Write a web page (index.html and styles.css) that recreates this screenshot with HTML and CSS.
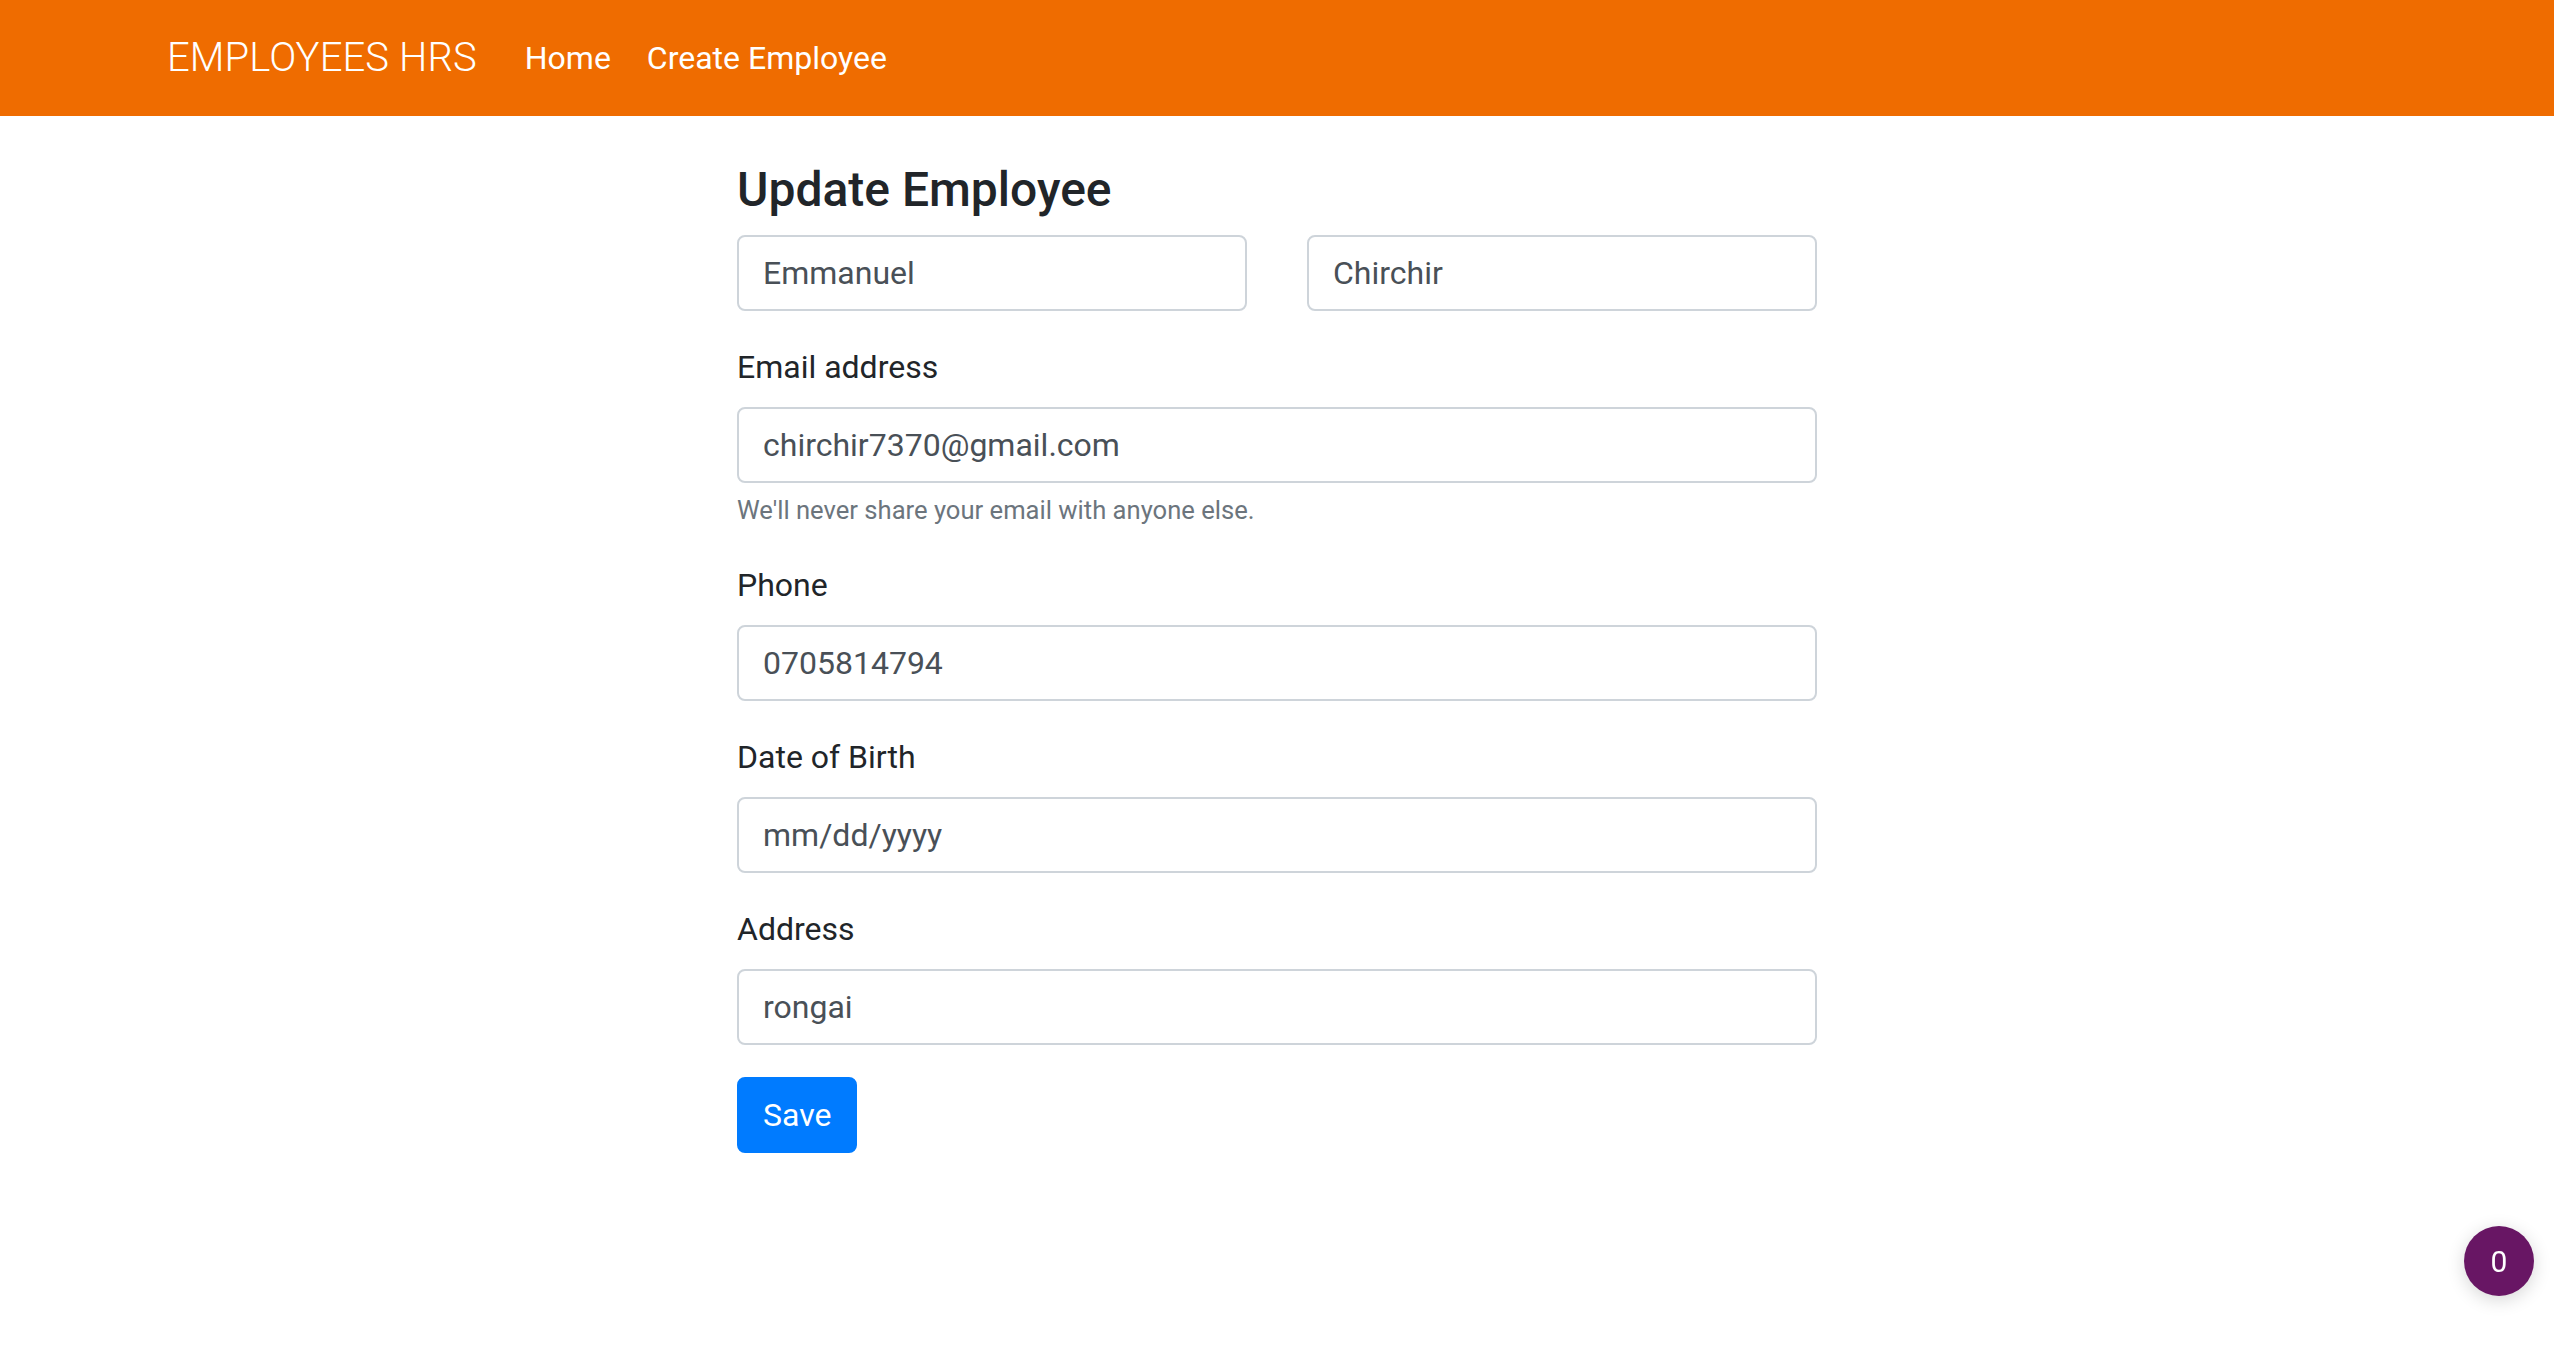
FILE: index.html
```html
<!DOCTYPE html>
<html lang="en">
<head>
<meta charset="utf-8">
<title>Employees HRS</title>
<link rel="stylesheet" href="styles.css">
</head>
<body>
<nav class="navbar">
  <div class="nav-container">
    <a class="brand" href="#">EMPLOYEES HRS</a>
    <a class="nav-link" href="#">Home</a>
    <a class="nav-link" href="#">Create Employee</a>
  </div>
</nav>
<main class="main">
  <h4 class="title">Update Employee</h4>
  <form class="form">
    <div class="name-row">
      <input class="input" type="text" value="Emmanuel">
      <input class="input" type="text" value="Chirchir">
    </div>
    <div class="field">
      <label class="label">Email address</label>
      <input class="input" type="email" value="chirchir7370@gmail.com">
      <small class="help">We'll never share your email with anyone else.</small>
    </div>
    <div class="field">
      <label class="label">Phone</label>
      <input class="input" type="text" value="0705814794">
    </div>
    <div class="field">
      <label class="label">Date of Birth</label>
      <input class="input date" type="text" placeholder="mm/dd/yyyy">
    </div>
    <div class="field">
      <label class="label">Address</label>
      <input class="input" type="text" value="rongai">
    </div>
    <button class="btn" type="button">Save</button>
  </form>
</main>
<div class="badge">0</div>
</body>
</html>
```
FILE: styles.css
```css
html, body {
  margin: 0;
  padding: 0;
}
body {
  font-family: Roboto, "Noto Sans", sans-serif;
  font-size: 32px;
  line-height: 1.5;
  color: #212529;
  background: #fff;
}
.navbar {
  background: #ef6c00;
  height: 116px;
  display: flex;
  align-items: center;
}
.nav-container {
  width: 100%;
  max-width: 2280px;
  margin: 0 auto;
  padding: 0 30px;
  box-sizing: border-box;
  display: flex;
  align-items: center;
}
.brand {
  color: #fff;
  text-decoration: none;
  font-size: 40px;
  line-height: 1.5;
  margin-right: 30px;
  font-weight: 300;
  letter-spacing: 0.1px;
}
.nav-link {
  color: #fff;
  text-decoration: none;
  font-size: 32px;
  padding: 0 18px;
  font-weight: 400;
}
.main {
  width: 1080px;
  margin: 0 auto;
  padding-top: 45px;
}
.title {
  font-size: 48px;
  font-weight: 500;
  line-height: 1.2;
  margin: 0 0 16px;
  color: #212529;
}
.name-row {
  display: grid;
  grid-template-columns: 1fr 1fr;
  column-gap: 60px;
  margin-bottom: 32px;
}
.field {
  margin-bottom: 32px;
}
.label {
  display: block;
  margin-bottom: 16px;
  line-height: 48px;
  font-size: 32px;
}
.input {
  display: block;
  width: 100%;
  box-sizing: border-box;
  height: 76px;
  padding: 12px 24px;
  font-family: inherit;
  font-size: 32px;
  line-height: 1.5;
  color: #495057;
  background: #fff;
  border: 2px solid #ced4da;
  border-radius: 8px;
  outline: none;
}
.input::placeholder {
  color: #495057;
  opacity: 1;
}
.help {
  display: block;
  margin-top: 8px;
  font-size: 25.6px;
  line-height: 1.5;
  color: #6c757d;
}
.btn {
  display: inline-block;
  font-family: inherit;
  font-size: 32px;
  line-height: 1.5;
  padding: 12px 24px;
  color: #fff;
  background: #007bff;
  border: 2px solid #007bff;
  border-radius: 8px;
  cursor: pointer;
}
.badge {
  position: fixed;
  right: 20px;
  bottom: 68px;
  width: 70px;
  height: 70px;
  border-radius: 50%;
  background: #681664;
  color: #fff;
  display: flex;
  align-items: center;
  justify-content: center;
  font-size: 30px;
  box-shadow: 0 4px 18px rgba(0, 0, 0, 0.16);
}
```
